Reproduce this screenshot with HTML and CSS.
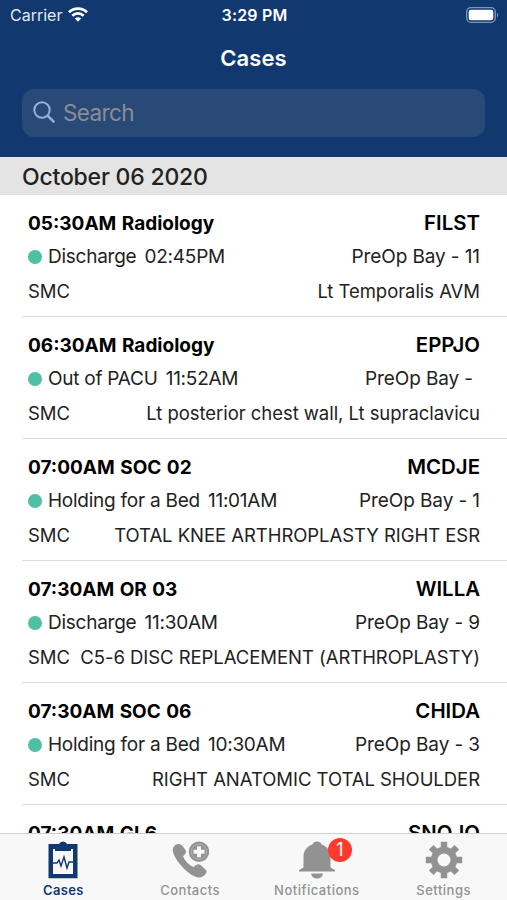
FILE: index.html
```
<!DOCTYPE html>
<html lang="en">
<head>
    <meta charset="UTF-8" />
    <meta name="viewport" content="width=device-width, initial-scale=1" />
    <title>Cases</title>
    <link rel="stylesheet" href="styles.css">
</head>
<body>
    <header class="header">
        <div class="status-bar">
            <div class="carrier">
                <span>Carrier</span>
                <svg class="wifi" viewBox="0 0 20 15" fill="none" stroke="#fff" stroke-width="2.7">
                    <path d="M1 5.2C6 .4 14 .4 19 5.2" />
                    <path d="M4.3 8.7C7.5 5.7 12.5 5.7 15.7 8.7" />
                    <path d="M10 14.8L6.8 11.6Q10 9 13.2 11.6Z" fill="#fff" stroke="none" />
                </svg>
            </div>
            <span class="clock">3:29 PM</span>
            <svg class="battery" viewBox="0 0 33 16">
                <rect x=".7" y=".7" width="28.6" height="14.6" rx="4.3" fill="none" stroke="#8298b9" stroke-width="1.3" />
                <rect x="2.7" y="2.7" width="24.6" height="10.6" rx="2.3" fill="#fff" />
                <path d="M31 5.5Q33.4 8 31 10.5Z" fill="#8298b9" />
            </svg>
        </div>
        <h1 class="title">Cases</h1>
        <div class="search">
            <svg class="search-icon" viewBox="0 0 22 22" fill="none" stroke="#8fb1df" stroke-width="2">
                <circle cx="9" cy="9" r="7.7" />
                <path d="M14.5 14.5L21.3 21.3" stroke-width="2.5" />
            </svg>
            <span>Search</span>
        </div>
    </header>

    <main class="content">
        <h2 class="date">October 06 2020</h2>
        <ul class="cases">
            <li class="case">
                <div class="line main"><span class="room">05:30AM Radiology</span><span class="name">FILST</span></div>
                <div class="line"><span class="status">Discharge <span class="time">02:45PM</span></span><span class="bay">PreOp Bay - 11</span></div>
                <div class="line detail"><span>SMC</span><span>Lt Temporalis AVM</span></div>
            </li>
            <li class="case">
                <div class="line main"><span class="room">06:30AM Radiology</span><span class="name">EPPJO</span></div>
                <div class="line"><span class="status">Out of PACU <span class="time">11:52AM</span></span><span class="bay bay-empty">PreOp Bay -</span></div>
                <div class="line detail"><span>SMC</span><span>Lt posterior chest wall, Lt supraclavicu</span></div>
            </li>
            <li class="case">
                <div class="line main"><span class="room">07:00AM SOC 02</span><span class="name">MCDJE</span></div>
                <div class="line"><span class="status">Holding for a Bed <span class="time">11:01AM</span></span><span class="bay">PreOp Bay - 1</span></div>
                <div class="line detail"><span>SMC</span><span>TOTAL KNEE ARTHROPLASTY RIGHT ESR</span></div>
            </li>
            <li class="case">
                <div class="line main"><span class="room">07:30AM OR 03</span><span class="name">WILLA</span></div>
                <div class="line"><span class="status">Discharge <span class="time">11:30AM</span></span><span class="bay">PreOp Bay - 9</span></div>
                <div class="line detail"><span>SMC</span><span>C5-6 DISC REPLACEMENT (ARTHROPLASTY)</span></div>
            </li>
            <li class="case">
                <div class="line main"><span class="room">07:30AM SOC 06</span><span class="name">CHIDA</span></div>
                <div class="line"><span class="status">Holding for a Bed <span class="time">10:30AM</span></span><span class="bay">PreOp Bay - 3</span></div>
                <div class="line detail"><span>SMC</span><span>RIGHT ANATOMIC TOTAL SHOULDER</span></div>
            </li>
            <li class="case">
                <div class="line main"><span class="room">07:30AM GI 6</span><span class="name">SNOJO</span></div>
            </li>
        </ul>
    </main>

    <nav class="tabs">
        <a class="tab active">
            <svg class="icon" viewBox="0 0 38 38">
                <path d="M4.5 3H33.5V37.3H4.5ZM9 8V33H29V8Z" fill="currentColor" fill-rule="evenodd" />
                <path d="M11 10V5Q11 3 14 3H15Q16 .5 19 .5T23 3H24Q27 3 27 5V10Z" fill="currentColor" />
                <path d="M9 22H13L15 19L17 25L20 16L23 27L25 21H29" fill="none" stroke="currentColor" stroke-width="1.4" />
            </svg>
            <span>Cases</span>
        </a>
        <a class="tab">
            <svg class="icon" viewBox="0 0 38 38">
                <path d="M3 5.5C5 2.5 9 2 11.5 5L14.5 9C15.5 10.5 15 12 13.5 13.5L12 15.5C14 20 18 24 22.5 26L25 24C26.5 23 28 23 29.5 24L34 28C36 29.5 36 31.5 34.5 33C31 38 25 37.5 18 32C10.5 26 4 18 2 11C1.5 8.5 1.5 7 3 5.5Z" fill="currentColor" />
                <circle cx="28" cy="10.7" r="10.2" fill="currentColor" />
                <circle cx="28" cy="10.7" r="7.6" fill="none" stroke="#c4c4c4" stroke-width=".7" />
                <path d="M26 5.2H30V8.7H33.5V12.7H30V16.2H26V12.7H22.5V8.7H26Z" fill="#f8f8f8" />
            </svg>
            <span>Contacts</span>
        </a>
        <a class="tab">
            <div class="bell">
                <svg class="icon" viewBox="0 0 38 38">
                    <path d="M19 .5C21.5 .5 23 1.5 23.5 3.5C29.5 5.5 32.5 10 32.5 15V26.5L37 29V30.5H1V29L5.5 26.5V15C5.5 10 8.5 5.5 14.5 3.5C15 1.5 16.5 .5 19 .5Z" fill="currentColor" />
                    <path d="M13 32.5H25Q24 37.5 19 37.5T13 32.5Z" fill="currentColor" />
                </svg>
                <span class="badge">1</span>
            </div>
            <span>Notifications</span>
        </a>
        <a class="tab">
            <svg class="icon" viewBox="0 0 38 38">
                <g stroke="currentColor" stroke-width="6.4">
                    <path d="M19 .8V37.2M.8 19H37.2M6.2 6.2L31.8 31.8M31.8 6.2L6.2 31.8" />
                </g>
                <circle cx="19" cy="19" r="13.2" fill="currentColor" />
                <circle cx="19" cy="19" r="6.5" fill="#f8f8f8" />
            </svg>
            <span>Settings</span>
        </a>
    </nav>
</body>
</html>
```
FILE: styles.css
```
* {
    box-sizing: border-box;
}
body {
    font-family: Inter, "Liberation Sans", sans-serif;
    background-color: #fff;
    color: #222;
    margin: 0;
    height: 100vh;
    display: flex;
    flex-direction: column;
    overflow: hidden;
}
.header {
    flex: none;
    height: 157px;
    background-color: #11396f;
    color: #fff;
}
.status-bar {
    display: grid;
    grid-template-columns: 1fr auto 1fr;
    align-items: center;
    height: 29px;
    padding: 0 8px 0 10px;
    font-size: 16px;
}
.carrier {
    display: flex;
    align-items: center;
    gap: 6px;
    color: #e3e9f2;
}
.wifi {
    width: 20px;
    height: 15px;
}
.clock {
    font-weight: 600;
    letter-spacing: 0.2px;
}
.battery {
    justify-self: end;
    width: 33px;
    height: 16px;
}
.title {
    margin: 0;
    height: 56px;
    line-height: 58px;
    text-align: center;
    font-size: 22px;
    font-weight: 600;
    letter-spacing: 0.1px;
}
.search {
    display: flex;
    align-items: center;
    gap: 8px;
    margin: 4px 22px 0;
    height: 48px;
    padding: 0 11px 2px 11px;
    border-radius: 12px;
    background-color: #294a77;
    color: #8a8d94;
    font-size: 22.5px;
    letter-spacing: -0.6px;
}
.search-icon {
    width: 22px;
    height: 22px;
}
.content {
    flex: 1;
    min-height: 0;
    overflow: hidden;
}
.date {
    margin: 0;
    height: 38px;
    line-height: 40px;
    padding-left: 22px;
    background-color: #e4e4e4;
    font-size: 23px;
    font-weight: 500;
    letter-spacing: -0.2px;
}
.cases {
    list-style: none;
    margin: 0;
    padding: 0 0 0 22px;
}
.case {
    height: 122px;
    padding: 12px 27px 0 6px;
    border-bottom: 1px solid #dcdcdc;
}
.line {
    display: flex;
    justify-content: space-between;
    height: 34px;
    line-height: 34px;
    font-size: 19px;
    white-space: pre;
}
.main {
    height: 33px;
    font-weight: 700;
    color: #000;
}
.room {
    word-spacing: 1px;
}
.name {
    font-size: 20.4px;
    font-weight: 600;
    line-height: 32px;
}
.status {
    letter-spacing: -0.25px;
}
.status::before {
    content: "";
    display: inline-block;
    width: 14px;
    height: 14px;
    margin-right: 6px;
    border-radius: 50%;
    background-color: #4fc0a3;
    vertical-align: -1px;
}
.time {
    margin-left: 3px;
}
.bay {
    letter-spacing: -0.1px;
}
.bay-empty {
    padding-right: 7px;
}
.detail {
    font-size: 18.5px;
    letter-spacing: -0.05px;
}
.tabs {
    flex: none;
    display: grid;
    grid-template-columns: repeat(4, 1fr);
    height: 67px;
    border-top: 1px solid #cfcfcf;
    background-color: #f8f8f8;
}
.tab {
    display: flex;
    flex-direction: column;
    align-items: center;
    padding-top: 7px;
    color: #929292;
    font-size: 13px;
    font-weight: 500;
    line-height: 22px;
    letter-spacing: 0.5px;
}
.active {
    color: #11396f;
    font-weight: 600;
    letter-spacing: 0.3px;
}
.icon {
    display: block;
    width: 38px;
    height: 38px;
}
.bell {
    position: relative;
}
.badge {
    position: absolute;
    top: -3px;
    left: 30px;
    width: 24px;
    height: 24px;
    border-radius: 50%;
    background-color: #ff3b30;
    color: #fff;
    text-align: center;
    line-height: 24px;
    font-size: 18px;
    font-weight: 400;
    letter-spacing: 0;
}
```
